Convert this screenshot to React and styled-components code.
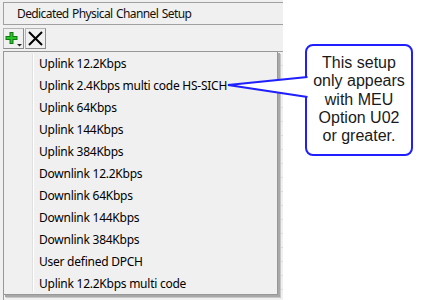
import React from "react";
import styled, { createGlobalStyle } from "styled-components";

const GlobalStyle = createGlobalStyle`
  html, body {
    margin: 0;
    padding: 0;
    background: #ffffff;
  }
  body {
    font-family: "Noto Sans", "Open Sans", sans-serif;
  }
`;

const Page = styled.div`
  position: relative;
  width: 423px;
  height: 300px;
  overflow: hidden;
  display: flex;
`;

const Window = styled.div`
  width: 283px;
  height: 300px;
  background: #f0f0f0;
  display: flex;
  flex-direction: column;
`;

const Header = styled.div`
  margin: 2px 0 0 3px;
  height: 21px;
  border: 1px solid #a0a0a0;
  border-right: none;
  display: flex;
  align-items: center;
  padding-left: 13px;
  font-size: 12px;
  color: #111111;
  letter-spacing: -0.6px;
  word-spacing: 1px;
`;

const Toolbar = styled.div`
  display: flex;
  gap: 1px;
  margin: 3px 0 0 3px;
`;

const ToolButton = styled.div`
  width: 19px;
  height: 19px;
  border: 1px solid #b4b4b4;
  border-right-color: #8c8c8c;
  border-bottom-color: #8c8c8c;
  background: #f0f0f0;
  display: flex;
  align-items: center;
  justify-content: center;
`;

const Grid = styled.div`
  flex: 1;
  margin: 2px 0 0 3px;
  border-top: 1px solid #a0a0a0;
  border-left: 1px solid #a0a0a0;
  background: repeating-linear-gradient(
    to bottom,
    #f0f0f0 0px,
    #f0f0f0 13px,
    #dcdcdc 13px,
    #dcdcdc 14px
  );
`;

const Menu = styled.div`
  position: absolute;
  left: 3px;
  top: 51px;
  width: 275px;
  height: 244px;
  background: #f0f0f0;
  border: 1px solid #979797;
  box-shadow: 2px 2px 0 #a8a8a8, 3px 3px 0 #c8c8c8;
  display: flex;
  flex-direction: column;
  padding-top: 1px;
  box-sizing: border-box;

  &::before {
    content: "";
    position: absolute;
    left: 28px;
    top: 2px;
    bottom: 2px;
    width: 1px;
    background: #e0e0e0;
    box-shadow: 1px 0 0 #ffffff;
  }
`;

const MenuItem = styled.div`
  height: 22px;
  display: flex;
  align-items: center;
  padding-left: 35px;
  font-size: 12px;
  color: #000000;
  letter-spacing: -0.25px;
  white-space: nowrap;
`;

const Callout = styled.div`
  position: absolute;
  left: 305px;
  top: 44px;
  width: 108px;
  height: 112px;
  box-sizing: border-box;
  border: 2px solid #1f1fff;
  border-radius: 8px;
  background: #ffffff;
  font-family: "Liberation Sans", Arial, sans-serif;
  font-size: 16px;
  line-height: 18.3px;
  text-align: center;
  color: #1a1a1a;
  padding-top: 8px;
`;

const Tail = styled.svg`
  position: absolute;
  left: 0;
  top: 0;
  width: 423px;
  height: 300px;
  pointer-events: none;
`;

const items = [
  "Uplink 12.2Kbps",
  "Uplink 2.4Kbps multi code HS-SICH",
  "Uplink 64Kbps",
  "Uplink 144Kbps",
  "Uplink 384Kbps",
  "Downlink 12.2Kbps",
  "Downlink 64Kbps",
  "Downlink 144Kbps",
  "Downlink 384Kbps",
  "User defined DPCH",
  "Uplink 12.2Kbps multi code",
];

export default function App() {
  return (
    <>
      <GlobalStyle />
      <Page>
        <Window>
          <Header>Dedicated Physical Channel Setup</Header>
          <Toolbar>
            <ToolButton>
              <svg width="19" height="19" viewBox="0 0 19 19">
                <path d="M1.5 9h12M7.5 3v12" stroke="#0d7a0d" strokeWidth="4" />
                <path d="M2.5 9h10M7.5 4v10" stroke="#2cc22c" strokeWidth="2" />
                <path d="M13 15h5l-2.5 2.5z" fill="#222" />
              </svg>
            </ToolButton>
            <ToolButton>
              <svg width="19" height="19" viewBox="0 0 19 19">
                <path d="M3 3l13 13M16 3L3 16" stroke="#000" strokeWidth="2" />
              </svg>
            </ToolButton>
          </Toolbar>
          <Grid />
        </Window>
        <Menu>
          {items.map((t) => (
            <MenuItem key={t}>{t}</MenuItem>
          ))}
        </Menu>
        <Callout>
          This setup
          <br />
          only appears
          <br />
          with MEU
          <br />
          Option U02
          <br />
          or greater.
        </Callout>
        <Tail viewBox="0 0 423 300">
          <path
            d="M307.5 77 L228 85 L307.5 97"
            fill="#ffffff"
            stroke="#1f1fff"
            strokeWidth="2"
            strokeLinejoin="miter"
          />
        </Tail>
      </Page>
    </>
  );
}
